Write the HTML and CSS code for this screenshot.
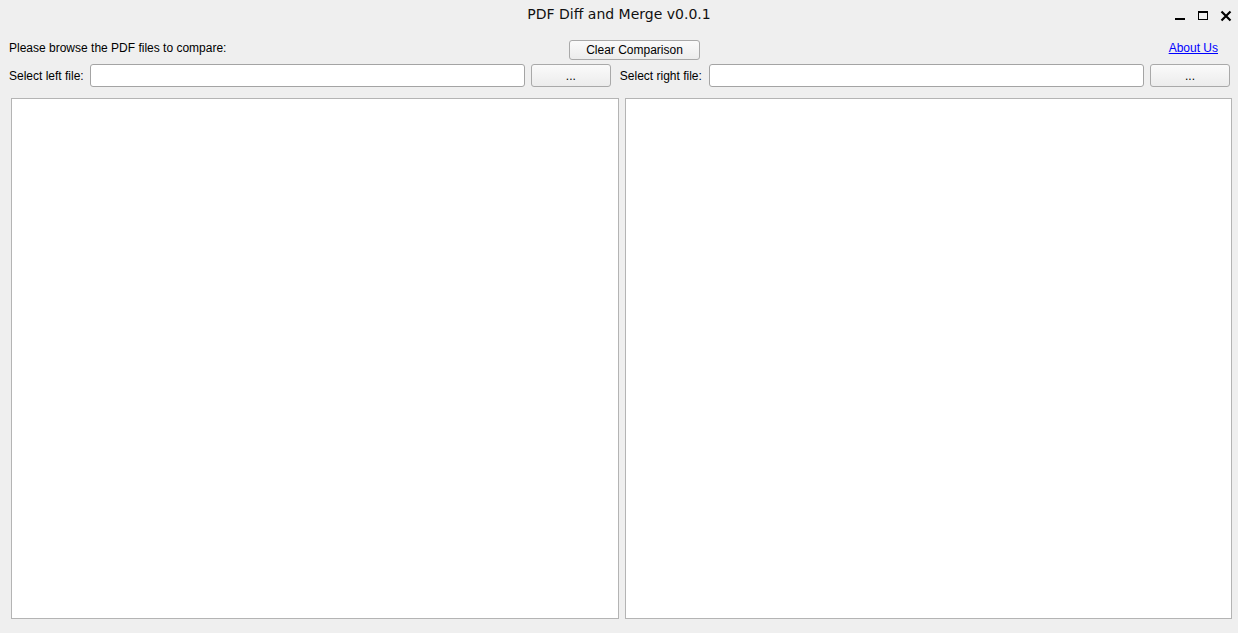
FILE: index.html
```html
<!DOCTYPE html>
<html>
<head>
<meta charset="utf-8">
<title>PDF Diff and Merge v0.0.1</title>
<link rel="stylesheet" href="styles.css">
</head>
<body>
<div class="window">
  <div class="titlebar">
    <div></div>
    <div class="title">PDF Diff and Merge v0.0.1</div>
    <div class="controls">
      <svg class="ctl" width="12" height="12" viewBox="0 0 12 12"><rect x="1" y="8" width="10" height="2" fill="#000"/></svg>
      <svg class="ctl" width="12" height="12" viewBox="0 0 12 12"><rect x="1.5" y="1.5" width="9" height="8" fill="none" stroke="#000" stroke-width="1"/><rect x="1" y="1" width="10" height="2" fill="#000"/></svg>
      <svg class="ctl" width="12" height="12" viewBox="0 0 12 12"><path d="M1.5 1.5 L10.5 10.5 M10.5 1.5 L1.5 10.5" stroke="#000" stroke-width="2.2" fill="none"/></svg>
    </div>
  </div>
  <div class="content">
    <div class="row1">
      <span class="label">Please browse the PDF files to compare:</span>
      <button class="btn clear">Clear Comparison</button>
      <a class="about" href="#">About Us</a>
    </div>
    <div class="row2">
      <span class="label left-label">Select left file:</span>
      <input class="field" type="text">
      <button class="btn browse">...</button>
      <span class="label right-label">Select right file:</span>
      <input class="field" type="text">
      <button class="btn browse">...</button>
    </div>
    <div class="panels">
      <div class="panel"></div>
      <div class="panel"></div>
    </div>
  </div>
</div>
</body>
</html>
```
FILE: styles.css
```css
html, body {
  margin: 0;
  padding: 0;
  background: #efefef;
}
body {
  width: 1238px;
  height: 633px;
  overflow: hidden;
  font-family: "Liberation Sans", Arial, sans-serif;
  font-size: 12px;
  color: #000;
}
.titlebar {
  height: 30px;
  display: grid;
  grid-template-columns: 1fr auto 1fr;
  align-items: center;
}
.title {
  font-family: "DejaVu Sans", sans-serif;
  font-size: 14px;
  color: #111;
  padding-bottom: 2px;
}
.controls {
  display: flex;
  justify-content: flex-end;
  gap: 11px;
  padding-right: 6px;
  padding-top: 2px;
}
.ctl {
  display: block;
}
.content {
  padding: 10px 8px 0 9px;
}
.row1 {
  display: grid;
  grid-template-columns: 560px auto 1fr;
  align-items: start;
  height: 20px;
}
.row1 .label {
  line-height: 14px;
  padding-top: 1px;
}
.about {
  justify-self: end;
  margin-right: 12px;
  line-height: 14px;
  padding-top: 1px;
  color: #0000ff;
  text-decoration: underline;
}
.btn {
  font-family: "Liberation Sans", Arial, sans-serif;
  font-size: 12px;
  color: #000;
  background: linear-gradient(#fafafa, #ececec);
  border: 1px solid #a9a9a9;
  border-radius: 3px;
  padding: 0;
  margin: 0;
}
.clear {
  width: 131px;
  height: 20px;
}
.row2 {
  display: flex;
  align-items: center;
  margin-top: 4px;
  height: 23px;
}
.left-label {
  margin-right: 6px;
}
.right-label {
  margin-left: 9px;
  margin-right: 7px;
}
.field {
  flex: 1;
  height: 23px;
  box-sizing: border-box;
  border: 1px solid #a4a4a4;
  border-radius: 3px;
  background: #fff;
  margin: 0;
  padding: 0 4px;
}
.browse {
  width: 80px;
  height: 23px;
  margin-left: 6px;
  line-height: 20px;
}
.panels {
  display: flex;
  gap: 6px;
  margin-top: 11px;
  margin-left: 2px;
  margin-right: -2px;
}
.panel {
  flex: 1;
  height: 521px;
  box-sizing: border-box;
  background: #fff;
  border: 1px solid #b4b4b4;
}
```
